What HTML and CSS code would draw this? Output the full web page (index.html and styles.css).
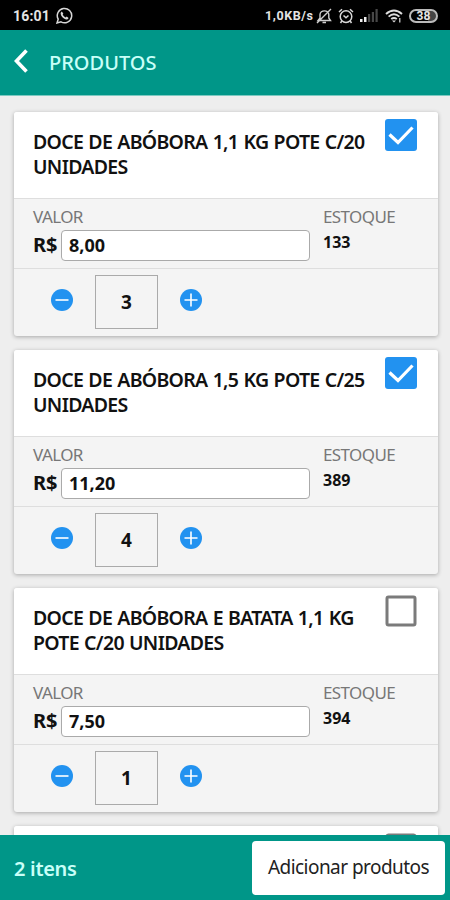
FILE: index.html
```
<!DOCTYPE html>
<html lang="pt-BR">
  <head>
    <meta charset="UTF-8" />
    <meta name="viewport" content="width=device-width, initial-scale=1.0" />
    <title>Produtos</title>
    <link rel="stylesheet" href="styles.css">
  </head>
  <body>
    <svg class="symbols" width="0" height="0">
      <symbol id="check" viewBox="0 0 32 32">
        <rect width="32" height="32" rx="3" fill="#2292f0" />
        <path d="M4.5 15.5L13 23.5L27.5 8.5" fill="none" stroke="#fff" stroke-width="3.2" />
      </symbol>
      <symbol id="empty" viewBox="0 0 32 32">
        <rect x="2" y="2" width="28" height="28" rx="1.5" fill="#fff" stroke="#7b7b7b" stroke-width="3" />
      </symbol>
      <symbol id="minus" viewBox="0 0 22 22">
        <circle cx="11" cy="11" r="11" fill="#2292f0" />
        <path d="M4.5 11H17.5" stroke="#fff" stroke-width="1.6" />
      </symbol>
      <symbol id="plus" viewBox="0 0 22 22">
        <circle cx="11" cy="11" r="11" fill="#2292f0" />
        <path d="M4.5 11H17.5M11 4.5V17.5" stroke="#fff" stroke-width="1.6" />
      </symbol>
    </svg>

    <div class="status-bar">
      <span class="time">16:01</span>
      <svg class="whatsapp" width="17" height="17" viewBox="0 0 17 17">
        <path d="M1 16L2.2 12.1A7.2 7.2 0 1 1 5 14.9Z" fill="none" stroke="#d8d8d8" stroke-width="1.5" />
        <path d="M5.8 4.4L7.3 6.5L6.7 7.7Q7.7 9.6 9.5 10.4L10.7 9.6L12.6 10.9Q11.9 12.7 10 12.4Q5.5 11 4.6 6.8Q4.5 5 5.8 4.4Z" fill="#d8d8d8" />
      </svg>
      <span class="speed">1,0KB/s</span>
      <svg class="muted" width="16" height="16" viewBox="0 0 16 16" fill="none" stroke="#cfcfcf" stroke-width="1.4">
        <path d="M2 12.5H14.5L12.8 10V6.5C12.8 1.6 4 1.6 4 6.5V10ZM6.5 14.5H10M1 15L15 1" />
      </svg>
      <svg class="alarm" width="16" height="16" viewBox="0 0 16 16" fill="none" stroke="#d8d8d8" stroke-width="1.5">
        <circle cx="8" cy="8.6" r="5.8" />
        <path d="M1 4L4 1.2M12 1.2L15 4M5.5 7.5L8 9.8L10.5 7.5M3.8 13L2.5 15M12.2 13L13.5 15" />
      </svg>
      <svg class="signal" width="18" height="13" viewBox="0 0 18 13">
        <path d="M0 10H2.5V13H0ZM4 8H6.5V13H4Z" fill="#eee" />
        <path d="M8 5H10.2V13H8ZM11.8 3H14V13H11.8ZM15.5 0H17.7V13H15.5Z" fill="#484848" />
      </svg>
      <svg class="wifi" width="18" height="14" viewBox="0 0 18 14" fill="none" stroke="#ddd" stroke-width="1.9">
        <path d="M1 5Q9 -2 17 5M3.6 7.6Q9 3 14.4 7.6M6.2 10.1Q9 7.8 11.8 10.1" />
        <path d="M7 11.5H11L9 13.6Z" fill="#ddd" stroke="none" />
        <path d="M14.8 9V13.5" stroke-width="1.2" />
      </svg>
      <span class="battery">38</span>
    </div>

    <header class="header">
      <svg width="14" height="24" viewBox="0 0 14 24">
        <path d="M12.5 1.5L2.5 12L12.5 22.5" fill="none" stroke="#fff" stroke-width="3.6" />
      </svg>
      <h1>PRODUTOS</h1>
    </header>

    <main class="products">
      <section class="card">
        <div class="card-title">
          <h2>DOCE DE ABÓBORA 1,1 KG POTE C/20<br>UNIDADES</h2>
          <svg class="checkbox"><use href="#check" /></svg>
        </div>
        <div class="card-info">
          <div class="price">
            <span class="label">VALOR</span>
            <div class="price-row"><b>R$</b><span class="price-input">8,00</span></div>
          </div>
          <div class="stock">
            <span class="label">ESTOQUE</span>
            <b>133</b>
          </div>
        </div>
        <div class="card-quantity">
          <svg class="round"><use href="#minus" /></svg>
          <span class="quantity">3</span>
          <svg class="round"><use href="#plus" /></svg>
        </div>
      </section>

      <section class="card">
        <div class="card-title">
          <h2>DOCE DE ABÓBORA 1,5 KG POTE C/25<br>UNIDADES</h2>
          <svg class="checkbox"><use href="#check" /></svg>
        </div>
        <div class="card-info">
          <div class="price">
            <span class="label">VALOR</span>
            <div class="price-row"><b>R$</b><span class="price-input">11,20</span></div>
          </div>
          <div class="stock">
            <span class="label">ESTOQUE</span>
            <b>389</b>
          </div>
        </div>
        <div class="card-quantity">
          <svg class="round"><use href="#minus" /></svg>
          <span class="quantity">4</span>
          <svg class="round"><use href="#plus" /></svg>
        </div>
      </section>

      <section class="card">
        <div class="card-title">
          <h2>DOCE DE ABÓBORA E BATATA 1,1 KG<br>POTE C/20 UNIDADES</h2>
          <svg class="checkbox"><use href="#empty" /></svg>
        </div>
        <div class="card-info">
          <div class="price">
            <span class="label">VALOR</span>
            <div class="price-row"><b>R$</b><span class="price-input">7,50</span></div>
          </div>
          <div class="stock">
            <span class="label">ESTOQUE</span>
            <b>394</b>
          </div>
        </div>
        <div class="card-quantity">
          <svg class="round"><use href="#minus" /></svg>
          <span class="quantity">1</span>
          <svg class="round"><use href="#plus" /></svg>
        </div>
      </section>

      <section class="card">
        <div class="card-title">
          <h2></h2>
          <svg class="checkbox"><use href="#empty" /></svg>
        </div>
      </section>
    </main>

    <footer class="footer">
      <span class="count">2 itens</span>
      <button class="add-button">Adicionar produtos</button>
    </footer>
  </body>
</html>
```

FILE: styles.css
```
* {
  box-sizing: border-box;
}

body {
  display: flex;
  flex-direction: column;
  height: 100vh;
  margin: 0;
  overflow: hidden;
  background: #eeeeee;
  color: #111;
  font-family: "Noto Sans", "Open Sans", sans-serif;
}

svg {
  display: block;
  flex: none;
}

.symbols {
  position: absolute;
}

.status-bar {
  display: flex;
  align-items: center;
  flex: none;
  height: 30px;
  padding: 1px 12px 0 13px;
  background: #000;
  color: #e4e4e4;
  font-family: Roboto, sans-serif;
  font-weight: bold;
}

.time {
  width: 43px;
  font-size: 14px;
  letter-spacing: 0.2px;
}

.speed {
  width: 49px;
  margin-left: auto;
  font-size: 12.5px;
  letter-spacing: 0.6px;
  white-space: nowrap;
}

.muted {
  margin-left: 2px;
}

.alarm {
  margin-left: 6px;
}

.signal {
  margin-left: 6px;
}

.wifi {
  margin-left: 7px;
}

.battery {
  width: 29px;
  height: 14px;
  margin-left: 6px;
  border: 2px solid #bbb;
  border-radius: 7px;
  background: linear-gradient(90deg, #000 70%, #444 70%);
  font-size: 12px;
  line-height: 10px;
  text-align: center;
}

.header {
  display: flex;
  align-items: center;
  flex: none;
  gap: 21px;
  height: 66px;
  padding: 0 14px 3px;
  border-bottom: 1px solid #7cc9c1;
  background: #009688;
}

.header h1 {
  margin: 3px 0 0;
  color: #c9fff8;
  font-size: 20px;
  font-weight: 500;
}

.products {
  display: flex;
  flex-direction: column;
  flex: 1;
  gap: 14px;
  min-height: 0;
  padding: 16px 12px 0 14px;
  overflow: hidden;
}

.card {
  flex: none;
  height: 224px;
  border-radius: 3px;
  background: #f4f4f4;
  box-shadow: 0 1px 4px rgba(0, 0, 0, 0.3);
}

.card-title {
  display: flex;
  justify-content: space-between;
  height: 86px;
  padding: 7px 21px 0 19px;
  border-radius: 3px 3px 0 0;
  background: #fff;
}

.card-title h2 {
  margin: 11px 0 0;
  font-size: 19.5px;
  font-weight: 600;
  letter-spacing: -0.7px;
  line-height: 24.5px;
  white-space: nowrap;
  word-spacing: 0.8px;
}

.checkbox {
  width: 32px;
  height: 32px;
}

.card-info {
  display: flex;
  height: 70px;
  padding: 7px 19px 0;
  border-top: 1px solid #dedede;
}

.price {
  width: 290px;
}

.label {
  display: block;
  color: #777;
  font-size: 17px;
  letter-spacing: -0.6px;
  line-height: 22px;
}

.price-row {
  display: flex;
  align-items: center;
  height: 32px;
  font-size: 20px;
}

.price-row b {
  width: 28px;
}

.price-input {
  width: 249px;
  height: 31px;
  margin-top: 2px;
  padding-left: 7px;
  border: 1.5px solid #aaa;
  border-radius: 4px;
  background: #fff;
  font-size: 18px;
  font-weight: bold;
  line-height: 28px;
}

.stock b {
  display: block;
  font-size: 16px;
  line-height: 28px;
}

.card-quantity {
  display: flex;
  align-items: center;
  gap: 22px;
  height: 68px;
  padding: 0 0 2px 37px;
  border-top: 1px solid #dedede;
}

.round {
  width: 22px;
  height: 22px;
  margin-bottom: 3px;
}

.quantity {
  width: 63px;
  height: 54px;
  border: 1.5px solid #aaa;
  font-size: 19px;
  font-weight: bold;
  line-height: 52px;
  text-align: center;
}

.footer {
  display: flex;
  align-items: center;
  justify-content: space-between;
  flex: none;
  height: 65px;
  padding: 0 5px 0 14px;
  background: #009688;
}

.count {
  margin-top: 1px;
  color: #c9fff8;
  font-size: 20px;
  font-weight: 600;
  letter-spacing: -0.3px;
}

.add-button {
  width: 193px;
  height: 54px;
  padding: 0 0 1px;
  border: 0;
  border-radius: 4px;
  background: #fff;
  color: #222;
  font: inherit;
  font-size: 19px;
  letter-spacing: -0.55px;
  white-space: nowrap;
}
```
